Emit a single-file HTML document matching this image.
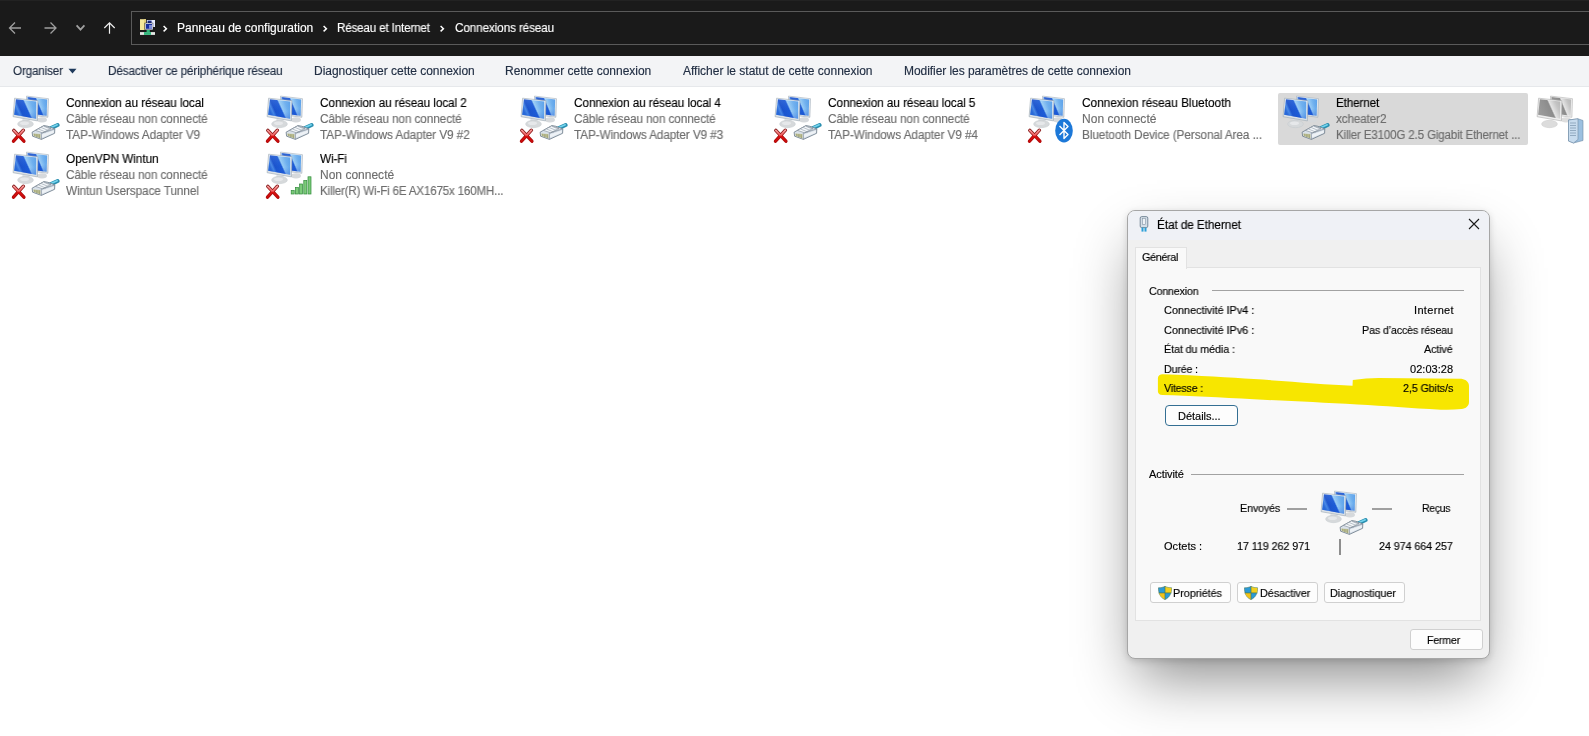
<!DOCTYPE html>
<html><head><meta charset="utf-8">
<style>
html,body{margin:0;padding:0}
body{width:1589px;height:736px;overflow:hidden;position:relative;background:#ffffff;font-family:"Liberation Sans",sans-serif}
.a{position:absolute}
.t{position:absolute;white-space:pre;line-height:1;font-family:"Liberation Sans",sans-serif;z-index:50;will-change:transform;-webkit-text-stroke:0.15px currentColor}
svg{overflow:visible}
</style></head><body>
<svg width="0" height="0" style="position:absolute">
<defs>
 <linearGradient id="scr" x1="0" y1="0.4" x2="1" y2="0">
  <stop offset="0" stop-color="#2a6ad8"/>
  <stop offset="0.1" stop-color="#4a8ae6"/>
  <stop offset="0.2" stop-color="#1a52cc"/>
  <stop offset="0.46" stop-color="#1c5ad6"/>
  <stop offset="0.52" stop-color="#9ccff6"/>
  <stop offset="0.72" stop-color="#6eb0ee"/>
  <stop offset="1" stop-color="#4d98e8"/>
 </linearGradient>
 <linearGradient id="scrv" x1="0" y1="0" x2="0" y2="1">
  <stop offset="0" stop-color="#ffffff" stop-opacity="0.10"/>
  <stop offset="0.6" stop-color="#2a70e0" stop-opacity="0.05"/>
  <stop offset="1" stop-color="#1550d0" stop-opacity="0.45"/>
 </linearGradient>
 <linearGradient id="scrg" x1="0" y1="0.4" x2="1" y2="0">
  <stop offset="0" stop-color="#9a9a9a"/>
  <stop offset="0.46" stop-color="#8c8c8c"/>
  <stop offset="0.52" stop-color="#e4e4e4"/>
  <stop offset="0.75" stop-color="#c4c4c4"/>
  <stop offset="1" stop-color="#b4b4b4"/>
 </linearGradient>
 <linearGradient id="bez" x1="0" y1="0" x2="0" y2="1">
  <stop offset="0" stop-color="#f2f5f8"/>
  <stop offset="1" stop-color="#d8dee4"/>
 </linearGradient>
 <linearGradient id="xin" x1="0" y1="0" x2="0" y2="1">
  <stop offset="0" stop-color="#f59a9a"/>
  <stop offset="0.45" stop-color="#f06060"/>
  <stop offset="0.55" stop-color="#dc1010"/>
  <stop offset="1" stop-color="#c80a0a"/>
 </linearGradient>
 <linearGradient id="xout" x1="0" y1="0" x2="0" y2="1">
  <stop offset="0" stop-color="#7a1010"/>
  <stop offset="0.5" stop-color="#a01010"/>
  <stop offset="1" stop-color="#b00808"/>
 </linearGradient>
 <symbol id="mon" viewBox="0 0 50 50">
  <ellipse cx="32" cy="25.8" rx="5" ry="2.6" fill="#d6d9dc"/>
  <polygon points="16.5,2.1 38.5,4.7 37.9,23.3 16.5,20.5" fill="url(#bez)" stroke="#a3afba" stroke-width="0.6"/>
  <polygon points="17.5,2.9 37.2,5.5 36.6,21.7 17.5,19.3" fill="url(#scr)"/>
  <polygon points="17.5,2.9 37.2,5.5 36.6,21.7 17.5,19.3" fill="url(#scrv)"/>
  <polygon points="12.5,25 19.5,26 19.5,29 12.5,29" fill="#d9dde0"/>
  <ellipse cx="15.5" cy="30" rx="7.9" ry="3.7" fill="#d6d9db" stroke="#c3c8cc" stroke-width="0.5"/>
  <ellipse cx="14.5" cy="29.3" rx="4.5" ry="1.8" fill="#e6e8ea"/>
  <polygon points="4.6,4.2 27.9,6.7 27.4,26.9 3.1,22.7" fill="url(#bez)" stroke="#9aa7b2" stroke-width="0.6"/>
  <polygon points="5.9,5.2 26.3,7.5 26.1,24.8 4.1,20.7" fill="url(#scr)"/>
  <polygon points="5.9,5.2 26.3,7.5 26.1,24.8 4.1,20.7" fill="url(#scrv)"/>
 </symbol>
 <symbol id="mong" viewBox="0 0 50 50">
  <ellipse cx="32" cy="25.8" rx="5" ry="2.6" fill="#dedede"/>
  <polygon points="16.5,2.1 38.5,4.7 37.9,23.3 16.5,20.5" fill="#eeeeee" stroke="#b4b4b4" stroke-width="0.6"/>
  <polygon points="17.5,2.9 37.2,5.5 36.6,21.7 17.5,19.3" fill="url(#scrg)"/>
  <ellipse cx="15.5" cy="30" rx="7.9" ry="3.7" fill="#dcdcdc" stroke="#c8c8c8" stroke-width="0.5"/>
  <polygon points="4.6,4.2 27.9,6.7 27.4,26.9 3.1,22.7" fill="#efefef" stroke="#acacac" stroke-width="0.6"/>
  <polygon points="5.9,5.2 26.3,7.5 26.1,24.8 4.1,20.7" fill="url(#scrg)"/>
 </symbol>
 <symbol id="rx" viewBox="0 0 50 50">
  <path d="M3.8,36.4 L13.9,47.2 M13.4,36.2 L3.5,47.2" stroke="url(#xout)" stroke-width="3.4" stroke-linecap="round" fill="none"/>
  <path d="M3.8,36.4 L13.9,47.2 M13.4,36.2 L3.5,47.2" stroke="url(#xin)" stroke-width="1.9" stroke-linecap="round" fill="none"/>
 </symbol>
 <symbol id="plug" viewBox="0 0 50 50">
  <path d="M40.5,34.4 L47.6,31" stroke="#2a8fb0" stroke-width="4" stroke-linecap="round" fill="none"/>
  <path d="M41,33.6 L47.2,30.8" stroke="#74d4ee" stroke-width="1.6" stroke-linecap="round" fill="none"/>
  <polygon points="22.1,38.2 33.8,31.6 37.5,32.2 44.8,34.8 44.6,39.3 31.4,45.4 22.6,42.2" fill="#d9e1ea" stroke="#6a7886" stroke-width="0.8"/>
  <polygon points="25.5,36.4 33.8,31.8 41,34.4 32.6,38.8" fill="#f4f7fa" stroke="#7d8996" stroke-width="0.6"/>
  <path d="M28.5,35 L36,38.2 M31.2,33.5 L38.6,36.6 M33.8,32.3 L41,35.2" stroke="#8e9aa6" stroke-width="0.6" fill="none"/>
  <path d="M31.2,39.3 L44.6,35 M31.2,39.3 L31.4,45.3" stroke="#6f7b88" stroke-width="0.6" fill="none"/>
  <polygon points="32,40.5 43.8,36.5 43.8,38.8 32.2,43.5" fill="#eef2f6"/>
  <polygon points="23.2,39.4 30.4,40 30.6,44.5 23.5,41.8" fill="#c9caa0"/>
  <path d="M24.6,39.8 L24.8,42.3 M26.2,40 L26.4,43 M27.8,40.2 L28,43.6 M29.3,40.3 L29.5,44" stroke="#858a5a" stroke-width="0.55"/>
 </symbol>
 <symbol id="bt" viewBox="0 0 50 50">
  <ellipse cx="38" cy="36.7" rx="8.8" ry="11.9" fill="#1c78d8"/>
  <path d="M33.5,32 L42,40.5 L38,44.5 L38,28.5 L42,32.5 L33.5,41" stroke="#ffffff" stroke-width="1.4" fill="none" stroke-linejoin="round"/>
 </symbol>
 <symbol id="wifi" viewBox="0 0 50 50">
  <g fill="#7ccb7a" stroke="#2f8a3a" stroke-width="0.7">
   <rect x="27.2" y="40.5" width="3" height="3.5"/>
   <rect x="31.4" y="37.5" width="3" height="6.5"/>
   <rect x="35.6" y="34" width="3" height="10"/>
   <rect x="39.8" y="30.5" width="3" height="13.5"/>
   <rect x="44" y="26.8" width="3" height="17.2"/>
  </g>
 </symbol>
 <symbol id="srv" viewBox="0 0 50 50">
  <polygon points="34.5,26 44,24.8 49,26.5 49,46.5 39.5,49 34.5,47" fill="#9cc0e0" stroke="#6f8aa3" stroke-width="0.6"/>
  <polygon points="34.5,26 44,24.8 44,45.5 39.5,49 34.5,47" fill="#c8dcee" stroke="#6f8aa3" stroke-width="0.6"/>
  <path d="M36,29 h6 M36,31.5 h6 M36,34 h6 M36,36.5 h6 M36,39 h6 M36,41.5 h6" stroke="#6f8aa3" stroke-width="0.6"/>
 </symbol>
 <symbol id="shield" viewBox="0 0 14 14">
  <path d="M7,0.3 C9,1.4 11.2,1.8 13.6,1.8 C13.6,7.5 11.5,11.6 7,13.6 C2.5,11.6 0.4,7.5 0.4,1.8 C2.8,1.8 5,1.4 7,0.3 Z" fill="#2b9ad6" stroke="#3b6a4a" stroke-width="0.5"/>
  <path d="M7,0.5 C9,1.5 11.2,1.9 13.5,1.9 C13.5,4 13.3,5.5 13,6.9 L7,6.9 Z" fill="#f2cf1e"/>
  <path d="M1,6.9 L7,6.9 L7,13.4 C3.8,12 1.9,9.8 1,6.9 Z" fill="#f2c21a"/>
  <path d="M7,0.5 V13.5 M0.6,6.9 H13.4" stroke="#4a7a50" stroke-width="0.7"/>
 </symbol>
</defs>
</svg>

<!-- title / address bar -->
<div class="a" style="left:0;top:0;width:1589px;height:56px;background:#1a1a1a"></div>
<div class="a" style="left:0;top:0;width:1589px;height:1px;background:#222222"></div>
<svg class="a" style="left:0;top:0" width="130" height="56">
 <path d="M9.5,28 H21 M15,22.5 L9.5,28 L15,33.5" stroke="#9e9e9e" stroke-width="1.3" fill="none"/>
 <path d="M56,28 H44.5 M50.5,22.5 L56,28 L50.5,33.5" stroke="#9e9e9e" stroke-width="1.3" fill="none"/>
 <path d="M76.6,25.4 L80.5,29.6 L84.4,25.4" stroke="#a0a0a0" stroke-width="1.8" fill="none"/>
 <path d="M109.5,33.8 V22.8 M104.3,28 L109.5,22.8 L114.7,28" stroke="#f0f0f0" stroke-width="1.2" fill="none"/>
</svg>
<div class="a" style="left:131px;top:11px;width:1470px;height:32px;border:1px solid #5a5a5a"></div>
<svg class="a" style="left:140px;top:19px" width="16" height="16" viewBox="0 0 16 16">
 <rect x="0" y="0.2" width="6" height="10.8" fill="#f6e79a"/>
 <rect x="4" y="0.2" width="2" height="10.8" fill="#e6d27a"/>
 <rect x="6.8" y="1" width="8.2" height="7" fill="#e6ebff"/>
 <rect x="7.6" y="1.6" width="4" height="2.6" fill="#1c2a80"/>
 <rect x="4.6" y="3.8" width="8.6" height="7" fill="#0c0c18"/>
 <rect x="5.2" y="4.2" width="7.6" height="6.4" fill="#e8ecff"/>
 <rect x="6" y="5" width="6" height="4.8" fill="#1a2fa0"/>
 <rect x="9" y="6" width="3" height="3.8" fill="#7c8ad8"/>
 <rect x="6.6" y="11" width="3.2" height="2.2" fill="#2fb57a"/>
 <rect x="0" y="13.1" width="15" height="2.8" fill="#e4e8e6"/>
 <rect x="4" y="13.1" width="7" height="2.8" fill="#2fb57a"/>
</svg>
<svg class="a" style="left:0;top:0" width="600" height="56">
 <path d="M163.6,26 L166.4,28.7 L163.6,31.4" stroke="#ffffff" stroke-width="1.5" fill="none"/>
 <path d="M323.6,26 L326.4,28.7 L323.6,31.4" stroke="#ffffff" stroke-width="1.5" fill="none"/>
 <path d="M440.6,26 L443.4,28.7 L440.6,31.4" stroke="#ffffff" stroke-width="1.5" fill="none"/>
</svg>

<!-- toolbar -->
<div class="a" style="left:0;top:56px;width:1589px;height:30px;background:#f3f4f6;border-bottom:1px solid #e6e8eb"></div>
<svg class="a" style="left:68px;top:68px" width="10" height="6"><path d="M0.5,0.8 H8.5 L4.5,5.5 Z" fill="#1e395b"/></svg>

<!-- list -->
<div class="a" style="left:1278px;top:93px;width:250px;height:52px;background:#d9d9d9;border-radius:2px"></div>

<svg class="a" style="left:10px;top:94px" width="50" height="50"><use href="#mon"/><use href="#rx"/><use href="#plug"/></svg>
<svg class="a" style="left:264px;top:94px" width="50" height="50"><use href="#mon"/><use href="#rx"/><use href="#plug"/></svg>
<svg class="a" style="left:518px;top:94px" width="50" height="50"><use href="#mon"/><use href="#rx"/><use href="#plug"/></svg>
<svg class="a" style="left:772px;top:94px" width="50" height="50"><use href="#mon"/><use href="#rx"/><use href="#plug"/></svg>
<svg class="a" style="left:1026px;top:94px" width="50" height="50"><use href="#mon"/><use href="#rx"/><use href="#bt"/></svg>
<svg class="a" style="left:1280px;top:94px" width="50" height="50"><use href="#mon"/><use href="#plug"/></svg>
<svg class="a" style="left:1534px;top:94px" width="50" height="50"><use href="#mong"/><use href="#srv"/></svg>
<svg class="a" style="left:10px;top:150px" width="50" height="50"><use href="#mon"/><use href="#rx"/><use href="#plug"/></svg>
<svg class="a" style="left:264px;top:150px" width="50" height="50"><use href="#mon"/><use href="#rx"/><use href="#wifi"/></svg>

<!-- dialog -->
<div class="a" style="left:1127px;top:210px;width:361px;height:447px;border:1px solid #a6a6a6;border-radius:8px;background:#f0f0f0;box-shadow:0 28px 56px -10px rgba(0,0,0,0.46), 0 2px 7px rgba(0,0,0,0.14);overflow:hidden">
 <div class="a" style="left:0;top:0;width:361px;height:29px;background:#eff1f6"></div>
</div>
<svg class="a" style="left:1139px;top:216px" width="10" height="16" viewBox="0 0 10 16">
 <rect x="1.2" y="0.6" width="7.6" height="11" rx="1.5" fill="#d4dde6" stroke="#6d8091" stroke-width="0.9"/>
 <rect x="3.5" y="2.5" width="3" height="6" fill="#eef2f6" stroke="#8395a5" stroke-width="0.6"/>
 <rect x="2.5" y="11.6" width="2" height="4" fill="#2a9fd8"/>
 <rect x="5.5" y="11.6" width="2" height="4" fill="#2a9fd8"/>
</svg>
<svg class="a" style="left:1468px;top:218px" width="12" height="12"><path d="M1,1 L11,11 M11,1 L1,11" stroke="#1a1a1a" stroke-width="1.1"/></svg>
<!-- tab panel -->
<div class="a" style="left:1135px;top:267px;width:344px;height:352px;background:#f9f9f9;border:1px solid #e2e2e2"></div>
<div class="a" style="left:1135px;top:247px;width:50px;height:21px;background:#f9f9f9;border:1px solid #e2e2e2;border-bottom:none"></div>
<div class="a" style="left:1212px;top:290px;width:252px;height:1px;background:#a2a2a2"></div>
<div class="a" style="left:1191px;top:474px;width:273px;height:1px;background:#a2a2a2"></div>
<!-- yellow marker -->
<svg class="a" style="left:0;top:0" width="1589" height="736">
 <path d="M1162.5,374.3 C1200,375.5 1230,377.5 1253.8,379.1 C1290,381.5 1325,384.5 1352.5,385.8 L1352.8,380 C1362,378.6 1370,378 1378.5,377.9 L1461.5,378.7 C1466,379.5 1469,382 1469,386 L1469,402 C1469,406 1466,408.6 1461.5,409 C1455,409.8 1448,409.9 1440.8,409.7 C1410,408 1385,406 1357.7,404.5 C1320,402.5 1290,401 1253.8,399.3 C1220,397.5 1190,396 1162.5,395.1 C1159.5,394.8 1158,393.5 1157.9,391.5 L1157.9,378 C1158,375.8 1160,374.4 1162.5,374.3 Z" fill="#f7e600"/>
</svg>
<!-- details button -->
<div class="a" style="left:1165px;top:405px;width:71px;height:19px;border:1px solid #346f93;border-radius:4px;background:#fdfdfd;z-index:10"></div>
<!-- activity -->
<div class="a" style="left:1287px;top:508px;width:20px;height:2px;background:#a0a0a0"></div>
<div class="a" style="left:1372px;top:508px;width:19.5px;height:2px;background:#a0a0a0"></div>
<svg class="a" style="left:1318px;top:489.3px" width="50" height="50"><use href="#mon"/><use href="#plug"/></svg>
<div class="a" style="left:1339px;top:539px;width:2px;height:16px;background:#8e8e8e"></div>
<!-- buttons -->
<div class="a" style="left:1150px;top:582px;width:79px;height:19px;border:1px solid #d0d0d0;border-radius:3px;background:#fdfdfd"></div>
<div class="a" style="left:1237px;top:582px;width:79px;height:19px;border:1px solid #d0d0d0;border-radius:3px;background:#fdfdfd"></div>
<div class="a" style="left:1324px;top:582px;width:79px;height:19px;border:1px solid #d0d0d0;border-radius:3px;background:#fdfdfd"></div>
<svg class="a" style="left:1158px;top:586px" width="14" height="14"><use href="#shield"/></svg>
<svg class="a" style="left:1244px;top:586px" width="14" height="14"><use href="#shield"/></svg>
<div class="a" style="left:1409.5px;top:629px;width:71px;height:19px;border:1px solid #d0d0d0;border-radius:3px;background:#fdfdfd"></div>

<div class="t" style="left:177.0px;top:21.64px;font-size:12px;color:#ffffff;letter-spacing:-0.023px;">Panneau de configuration</div>
<div class="t" style="left:337.4px;top:21.64px;font-size:12px;color:#ffffff;letter-spacing:-0.172px;transform:scaleX(0.9700);transform-origin:0 0;">Réseau et Internet</div>
<div class="t" style="left:454.5px;top:21.64px;font-size:12px;color:#ffffff;letter-spacing:-0.134px;transform:scaleX(0.9791);transform-origin:0 0;">Connexions réseau</div>
<div class="t" style="left:12.6px;top:64.84px;font-size:12px;color:#222f44;letter-spacing:-0.166px;transform:scaleX(0.9743);transform-origin:0 0;">Organiser</div>
<div class="t" style="left:107.6px;top:64.84px;font-size:12px;color:#222f44;letter-spacing:-0.126px;transform:scaleX(0.9777);transform-origin:0 0;">Désactiver ce périphérique réseau</div>
<div class="t" style="left:313.5px;top:64.84px;font-size:12px;color:#222f44;letter-spacing:-0.024px;">Diagnostiquer cette connexion</div>
<div class="t" style="left:505.3px;top:64.84px;font-size:12px;color:#222f44;letter-spacing:-0.021px;">Renommer cette connexion</div>
<div class="t" style="left:682.7px;top:64.84px;font-size:12px;color:#222f44;letter-spacing:-0.012px;">Afficher le statut de cette connexion</div>
<div class="t" style="left:903.5px;top:64.84px;font-size:12px;color:#222f44;letter-spacing:-0.061px;">Modifier les paramètres de cette connexion</div>
<div class="t" style="left:65.6px;top:96.54px;font-size:12px;color:#000000;letter-spacing:-0.087px;transform:scaleX(0.9852);transform-origin:0 0;">Connexion au réseau local</div>
<div class="t" style="left:65.6px;top:112.64px;font-size:12px;color:#6d6d6d;letter-spacing:-0.108px;transform:scaleX(0.9823);transform-origin:0 0;">Câble réseau non connecté</div>
<div class="t" style="left:65.6px;top:128.54px;font-size:12px;color:#6d6d6d;letter-spacing:-0.086px;transform:scaleX(0.9868);transform-origin:0 0;">TAP-Windows Adapter V9</div>
<div class="t" style="left:319.6px;top:96.54px;font-size:12px;color:#000000;letter-spacing:-0.104px;transform:scaleX(0.9821);transform-origin:0 0;">Connexion au réseau local 2</div>
<div class="t" style="left:319.6px;top:112.64px;font-size:12px;color:#6d6d6d;letter-spacing:-0.108px;transform:scaleX(0.9823);transform-origin:0 0;">Câble réseau non connecté</div>
<div class="t" style="left:319.6px;top:128.54px;font-size:12px;color:#6d6d6d;letter-spacing:-0.100px;transform:scaleX(0.9843);transform-origin:0 0;">TAP-Windows Adapter V9 #2</div>
<div class="t" style="left:573.6px;top:96.54px;font-size:12px;color:#000000;letter-spacing:-0.100px;transform:scaleX(0.9828);transform-origin:0 0;">Connexion au réseau local 4</div>
<div class="t" style="left:573.6px;top:112.64px;font-size:12px;color:#6d6d6d;letter-spacing:-0.108px;transform:scaleX(0.9823);transform-origin:0 0;">Câble réseau non connecté</div>
<div class="t" style="left:573.6px;top:128.54px;font-size:12px;color:#6d6d6d;letter-spacing:-0.113px;transform:scaleX(0.9824);transform-origin:0 0;">TAP-Windows Adapter V9 #3</div>
<div class="t" style="left:827.6px;top:96.54px;font-size:12px;color:#000000;letter-spacing:-0.092px;transform:scaleX(0.9842);transform-origin:0 0;">Connexion au réseau local 5</div>
<div class="t" style="left:827.6px;top:112.64px;font-size:12px;color:#6d6d6d;letter-spacing:-0.108px;transform:scaleX(0.9823);transform-origin:0 0;">Câble réseau non connecté</div>
<div class="t" style="left:827.6px;top:128.54px;font-size:12px;color:#6d6d6d;letter-spacing:-0.094px;transform:scaleX(0.9853);transform-origin:0 0;">TAP-Windows Adapter V9 #4</div>
<div class="t" style="left:1081.6px;top:96.54px;font-size:12px;color:#000000;letter-spacing:-0.050px;transform:scaleX(0.9917);transform-origin:0 0;">Connexion réseau Bluetooth</div>
<div class="t" style="left:1081.6px;top:112.64px;font-size:12px;color:#6d6d6d;letter-spacing:0.036px;">Non connecté</div>
<div class="t" style="left:1081.6px;top:128.54px;font-size:12px;color:#6d6d6d;letter-spacing:-0.098px;transform:scaleX(0.9820);transform-origin:0 0;">Bluetooth Device (Personal Area ...</div>
<div class="t" style="left:1335.6px;top:96.54px;font-size:12px;color:#000000;letter-spacing:-0.153px;transform:scaleX(0.9759);transform-origin:0 0;">Ethernet</div>
<div class="t" style="left:1335.6px;top:112.64px;font-size:12px;color:#6d6d6d;letter-spacing:-0.142px;transform:scaleX(0.9781);transform-origin:0 0;">xcheater2</div>
<div class="t" style="left:1335.6px;top:128.54px;font-size:12px;color:#6d6d6d;letter-spacing:-0.179px;transform:scaleX(0.9664);transform-origin:0 0;">Killer E3100G 2.5 Gigabit Ethernet ...</div>
<div class="t" style="left:65.6px;top:152.54px;font-size:12px;color:#000000;letter-spacing:-0.076px;transform:scaleX(0.9895);transform-origin:0 0;">OpenVPN Wintun</div>
<div class="t" style="left:65.6px;top:168.64px;font-size:12px;color:#6d6d6d;letter-spacing:-0.108px;transform:scaleX(0.9823);transform-origin:0 0;">Câble réseau non connecté</div>
<div class="t" style="left:65.6px;top:184.54px;font-size:12px;color:#6d6d6d;letter-spacing:-0.104px;transform:scaleX(0.9832);transform-origin:0 0;">Wintun Userspace Tunnel</div>
<div class="t" style="left:319.6px;top:152.54px;font-size:12px;color:#000000;letter-spacing:-0.129px;transform:scaleX(0.9809);transform-origin:0 0;">Wi-Fi</div>
<div class="t" style="left:319.6px;top:168.64px;font-size:12px;color:#6d6d6d;letter-spacing:0.009px;">Non connecté</div>
<div class="t" style="left:319.6px;top:184.54px;font-size:12px;color:#6d6d6d;letter-spacing:-0.187px;transform:scaleX(0.9674);transform-origin:0 0;">Killer(R) Wi-Fi 6E AX1675x 160MH...</div>
<div class="t" style="left:1157.4px;top:218.94px;font-size:12px;color:#000000;letter-spacing:-0.093px;transform:scaleX(0.9837);transform-origin:0 0;">État de Ethernet</div>
<div class="t" style="left:1141.6px;top:252.17px;font-size:11.5px;color:#000000;letter-spacing:-0.378px;transform:scaleX(0.9434);transform-origin:0 0;">Général</div>
<div class="t" style="left:1149.0px;top:285.69px;font-size:11px;color:#000000;letter-spacing:-0.185px;transform:scaleX(0.9714);transform-origin:0 0;">Connexion</div>
<div class="t" style="left:1164.1px;top:305.49px;font-size:11px;color:#000000;letter-spacing:-0.040px;transform:scaleX(0.9920);transform-origin:0 0;">Connectivité IPv4 :</div>
<div class="t" style="left:1164.1px;top:325.19px;font-size:11px;color:#000000;letter-spacing:-0.040px;transform:scaleX(0.9920);transform-origin:0 0;">Connectivité IPv6 :</div>
<div class="t" style="left:1164.1px;top:344.29px;font-size:11px;color:#000000;letter-spacing:-0.109px;transform:scaleX(0.9791);transform-origin:0 0;">État du média :</div>
<div class="t" style="left:1164.1px;top:364.29px;font-size:11px;color:#000000;letter-spacing:-0.178px;transform:scaleX(0.9697);transform-origin:0 0;">Durée :</div>
<div class="t" style="left:1164.1px;top:383.39px;font-size:11px;color:#000000;letter-spacing:-0.179px;transform:scaleX(0.9651);transform-origin:0 0;">Vitesse :</div>
<div class="t" style="left:1413.5px;top:305.29px;font-size:11px;color:#000000;letter-spacing:0.324px;">Internet</div>
<div class="t" style="left:1362.1px;top:325.19px;font-size:11px;color:#000000;letter-spacing:-0.150px;transform:scaleX(0.9733);transform-origin:0 0;">Pas d’accès réseau</div>
<div class="t" style="left:1424.4px;top:344.49px;font-size:11px;color:#000000;letter-spacing:-0.130px;transform:scaleX(0.9776);transform-origin:0 0;">Activé</div>
<div class="t" style="left:1410.0px;top:364.19px;font-size:11px;color:#000000;letter-spacing:0.036px;">02:03:28</div>
<div class="t" style="left:1402.8px;top:383.29px;font-size:11px;color:#000000;letter-spacing:-0.116px;transform:scaleX(0.9775);transform-origin:0 0;">2,5 Gbits/s</div>
<div class="t" style="left:1177.6px;top:410.69px;font-size:11px;color:#000000;letter-spacing:-0.013px;">Détails...</div>
<div class="t" style="left:1149.0px;top:468.89px;font-size:11px;color:#000000;letter-spacing:-0.070px;">Activité</div>
<div class="t" style="left:1239.5px;top:502.69px;font-size:11px;color:#000000;letter-spacing:-0.162px;transform:scaleX(0.9765);transform-origin:0 0;">Envoyés</div>
<div class="t" style="left:1422.4px;top:502.69px;font-size:11px;color:#000000;letter-spacing:-0.333px;transform:scaleX(0.9560);transform-origin:0 0;">Reçus</div>
<div class="t" style="left:1163.5px;top:540.59px;font-size:11px;color:#000000;letter-spacing:0.039px;">Octets :</div>
<div class="t" style="left:1236.7px;top:540.59px;font-size:11px;color:#000000;letter-spacing:-0.100px;transform:scaleX(0.9826);transform-origin:0 0;">17 119 262 971</div>
<div class="t" style="left:1379.2px;top:540.59px;font-size:11px;color:#000000;letter-spacing:-0.100px;transform:scaleX(0.9827);transform-origin:0 0;">24 974 664 257</div>
<div class="t" style="left:1173.1px;top:587.69px;font-size:11px;color:#000000;letter-spacing:-0.065px;transform:scaleX(0.9881);transform-origin:0 0;">Propriétés</div>
<div class="t" style="left:1259.5px;top:587.69px;font-size:11px;color:#000000;letter-spacing:-0.089px;transform:scaleX(0.9843);transform-origin:0 0;">Désactiver</div>
<div class="t" style="left:1330.0px;top:587.69px;font-size:11px;color:#000000;letter-spacing:-0.080px;transform:scaleX(0.9858);transform-origin:0 0;">Diagnostiquer</div>
<div class="t" style="left:1427.4px;top:634.69px;font-size:11px;color:#000000;letter-spacing:-0.231px;transform:scaleX(0.9666);transform-origin:0 0;">Fermer</div>
</body></html>
